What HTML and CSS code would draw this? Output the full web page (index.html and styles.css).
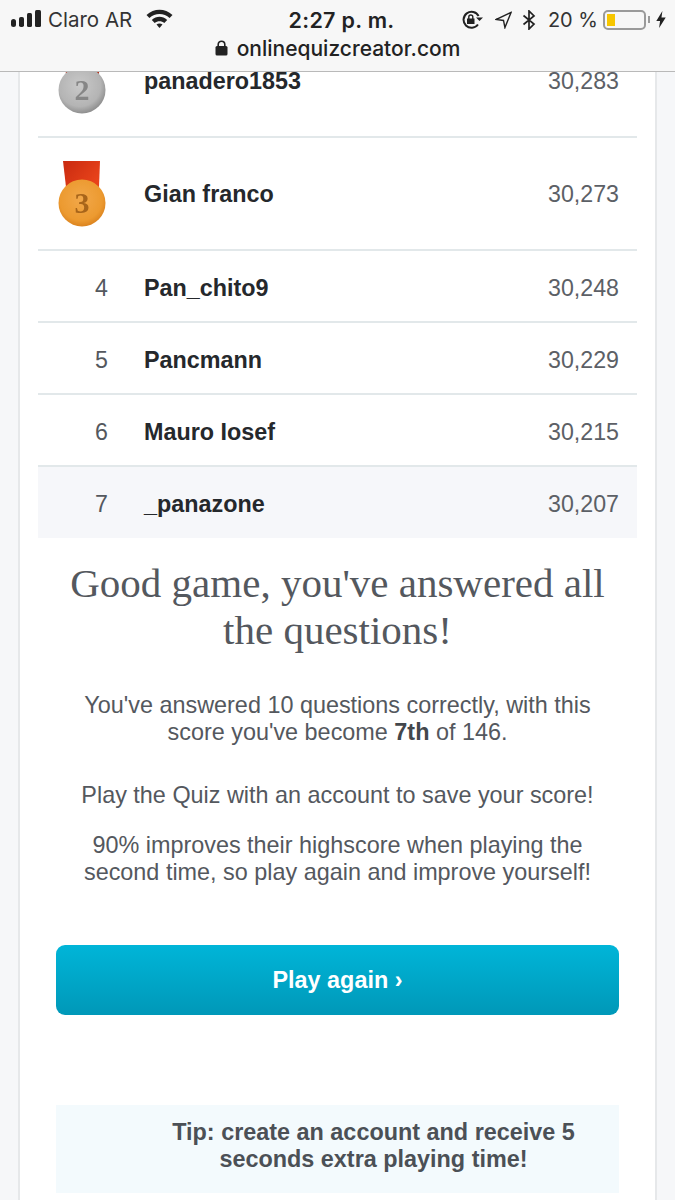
FILE: index.html
```html
<!DOCTYPE html>
<html lang="en">
<head>
<meta charset="utf-8">
<title>Online Quiz Creator</title>
<link rel="stylesheet" href="styles.css">
</head>
<body>
<header class="topbar">
  <div class="status">
    <div class="status-left">
      <svg class="signal" width="30" height="17" viewBox="0 0 30 17"><rect x="0" y="9" width="5" height="8" rx="2.5"/><rect x="8" y="7" width="5" height="10" rx="1.8"/><rect x="16" y="3" width="5" height="14" rx="1.5"/><rect x="24" y="0" width="6" height="17" rx="1.5"/></svg>
      <span>Claro AR</span>
      <svg class="wifi" width="27" height="19" viewBox="0 0 27 19"><path d="M0.5 6C8 -1 19 -1 26.5 6L23.6 9C18 3.8 9 3.8 3.4 9Z"/><path d="M5.8 11C10.5 6.8 16.5 6.8 21.2 11L18.3 14C15.5 11.6 11.5 11.6 8.7 14Z"/><path d="M10.5 15.5C12.3 14.2 14.7 14.2 16.5 15.5L13.5 19Z"/></svg>
    </div>
    <div class="status-time">2:27 p. m.</div>
    <div class="status-right">
      <svg width="21" height="19" viewBox="0 0 21 19" fill="none" stroke="#222" stroke-width="2"><path d="M16 14.5A8 8 0 1 1 16.6 6"/><path d="M14 7.5h7l-3.5 3.5z" fill="#222" stroke="none"/><rect x="5" y="8.5" width="7.5" height="5.5" fill="#222" stroke="none"/><path d="M6.8 9V7a2 2 0 0 1 4 0V9" stroke-width="1.4"/></svg>
      <svg class="arrow" width="17" height="18" viewBox="0 0 18 18" fill="none" stroke="#222" stroke-width="1.5"><path d="M17 1L1 8.5L9 9.5L10.5 17Z"/></svg>
      <svg class="bt" width="14" height="20" viewBox="0 0 14 20" fill="none" stroke="#222" stroke-width="1.7"><path d="M1.5 5.5L12 14L7 19V1L12 6L1.5 14.5"/></svg>
      <span class="pct">20 %</span>
      <div class="battery"><div class="battery-level"></div></div>
      <svg class="bolt" width="10" height="17" viewBox="0 0 10 18"><path d="M6.5 0L0 10.5H4L3 18L10 7H5.5Z" fill="#222"/></svg>
    </div>
  </div>
  <div class="address">
    <svg width="13" height="16" viewBox="0 0 13 16"><rect x="0.5" y="6" width="12" height="9.5" rx="1.5" fill="#222"/><path d="M3.2 6.5V4.5a3.3 3.3 0 0 1 6.6 0V6.5" fill="none" stroke="#222" stroke-width="1.6"/></svg>
    <span>onlinequizcreator.com</span>
  </div>
</header>

<main class="card">
  <div class="scores">
    <div class="row row-medal">
      <div class="rank">
        <svg class="medal" width="54" height="67" viewBox="0 0 54 67"><defs><radialGradient id="silver" cx="45%" cy="40%" r="60%"><stop offset="0" stop-color="#c9c9c9"/><stop offset="0.75" stop-color="#b4b4b4"/><stop offset="1" stop-color="#8f8f8f"/></radialGradient></defs><path d="M8 0H45L44 26H11Z" fill="#b5321c"/><circle cx="27" cy="42" r="23.5" fill="url(#silver)"/><text x="27" y="52" class="medal-digit digit-silver">2</text></svg>
      </div>
      <div class="name">panadero1853</div>
      <div class="score">30,283</div>
    </div>
    <div class="row row-medal">
      <div class="rank">
        <svg class="medal" width="54" height="67" viewBox="0 0 54 67"><defs><linearGradient id="ribbon" x1="0" x2="1" y1="0" y2="0.6"><stop offset="0" stop-color="#c92a10"/><stop offset="1" stop-color="#e8431a"/></linearGradient><radialGradient id="bronze" cx="48%" cy="42%" r="60%"><stop offset="0" stop-color="#f2a84a"/><stop offset="0.75" stop-color="#ec9a30"/><stop offset="1" stop-color="#d9801c"/></radialGradient></defs><path d="M8 0H45L44 26H11Z" fill="url(#ribbon)"/><circle cx="27" cy="42" r="23.5" fill="url(#bronze)"/><text x="27" y="52" class="medal-digit digit-bronze">3</text></svg>
      </div>
      <div class="name">Gian franco</div>
      <div class="score">30,273</div>
    </div>
    <div class="row row-plain"><div class="rank">4</div><div class="name">Pan_chito9</div><div class="score">30,248</div></div>
    <div class="row row-plain"><div class="rank">5</div><div class="name">Pancmann</div><div class="score">30,229</div></div>
    <div class="row row-plain"><div class="rank">6</div><div class="name">Mauro Iosef</div><div class="score">30,215</div></div>
    <div class="row row-plain row-me"><div class="rank">7</div><div class="name">_panazone</div><div class="score">30,207</div></div>
  </div>

  <h1 class="title">Good game, you've answered all the questions!</h1>
  <p class="msg msg-first">You've answered 10 questions correctly, with this score you've become <strong>7th</strong> of 146.</p>
  <p class="msg msg-save">Play the Quiz with an account to save your score!</p>
  <p class="msg msg-last">90% improves their highscore when playing the second time, so play again and improve yourself!</p>

  <a class="play" href="#">Play again ›</a>

  <div class="tip">Tip: create an account and receive 5 seconds extra playing time!</div>
</main>
</body>
</html>
```
FILE: styles.css
```css
* { box-sizing: border-box; }
html, body { margin: 0; height: 1200px; overflow: hidden; }
body {
  background: #f6f7f9;
  font-family: "Liberation Sans", Arial, sans-serif;
  color: #54585e;
  padding: 0 18px;
}
.topbar {
  position: fixed;
  top: 0;
  left: 0;
  width: 675px;
  height: 72px;
  background: #f7f7f7;
  border-bottom: 1px solid #b9b9b9;
  color: #222;
  z-index: 2;
}
.status {
  height: 36px;
  padding: 3px 9px 0 11px;
  display: grid;
  grid-template-columns: 1fr auto 1fr;
  align-items: center;
  font-family: Inter, "Liberation Sans", sans-serif;
}
.status-left { display: flex; align-items: center; gap: 7px; font-size: 20.5px; color: #333; }
.signal { fill: #222; margin-bottom: 3px; }
.wifi { fill: #222; margin-left: 7px; margin-bottom: 3px; }
.status-time { font-size: 21.5px; font-weight: 600; letter-spacing: .3px; margin-left: 6px; }
.status-right { display: flex; align-items: center; justify-content: flex-end; gap: 7px; font-size: 20px; color: #333; }
.arrow { margin-left: 5px; }
.bt { margin-left: 3px; }
.pct { margin-left: 5px; }
.battery {
  position: relative;
  width: 43px;
  height: 20px;
  border: 2px solid #9a9a9a;
  border-radius: 5px;
  padding: 2px;
  margin: 0 3px 0 -2px;
}
.battery::after {
  content: "";
  position: absolute;
  right: -6px;
  top: 4px;
  width: 2px;
  height: 7px;
  background: #9a9a9a;
}
.battery-level { width: 8px; height: 100%; background: #f7c600; }
.address {
  display: flex;
  justify-content: center;
  align-items: center;
  gap: 9px;
  height: 24px;
  font-family: Inter, "Liberation Sans", sans-serif;
  font-size: 21px;
  font-weight: 500;
}
.card {
  margin-top: 25px;
  height: 1175px;
  background: #fff;
  border-left: 2px solid #e6e8ea;
  border-right: 2px solid #e6e8ea;
  padding: 0 18px;
}
.row {
  display: flex;
  align-items: center;
  height: 72px;
  border-bottom: 2px solid #e2e8ea;
  font-size: 23.2px;
}
.row-plain { padding-top: 4px; }
.row-medal { height: 113px; padding-top: 1px; }
.row-me { background: #f6f7fa; border-bottom: 0; height: 71px; padding-top: 3px; }
.rank { width: 106px; padding-right: 36px; text-align: right; color: #54585e; flex: none; }
.row-medal .rank { padding: 0 0 0 17px; text-align: left; display: flex; }
.medal { filter: blur(.4px); }
.name { flex: 1; font-weight: 700; font-size: 23.35px; color: #25282c; }
.score { padding-right: 18px; color: #5c6066; }
.medal-digit { font-family: "Liberation Serif", serif; font-weight: 700; font-size: 30px; text-anchor: middle; }
.digit-silver { fill: #868686; }
.digit-bronze { fill: #a8651a; }
.title {
  margin: 22px 0 0;
  padding: 0 26px;
  text-align: center;
  font-family: "Liberation Serif", serif;
  font-weight: 400;
  font-size: 41px;
  line-height: 47px;
  color: #54585e;
}
.msg { margin: 0; text-align: center; font-size: 23.4px; line-height: 27px; padding: 0 18px; }
.msg strong { color: #43474c; }
.msg-first { margin-top: 38px; }
.msg-save { margin-top: 36px; }
.msg-last { margin-top: 23px; }
.play {
  display: flex;
  justify-content: center;
  align-items: center;
  height: 70px;
  margin: 59px 18px 0;
  border-radius: 9px;
  background: linear-gradient(#00b5d8, #0098b8);
  color: #fff;
  font-size: 23.4px;
  font-weight: 700;
  text-decoration: none;
}
.tip {
  margin: 90px 18px 0;
  height: 88px;
  padding: 14px 36px 0 108px;
  background: #f3fafd;
  text-align: center;
  font-size: 23.4px;
  font-weight: 700;
  line-height: 27px;
  color: #4b5056;
}
```
